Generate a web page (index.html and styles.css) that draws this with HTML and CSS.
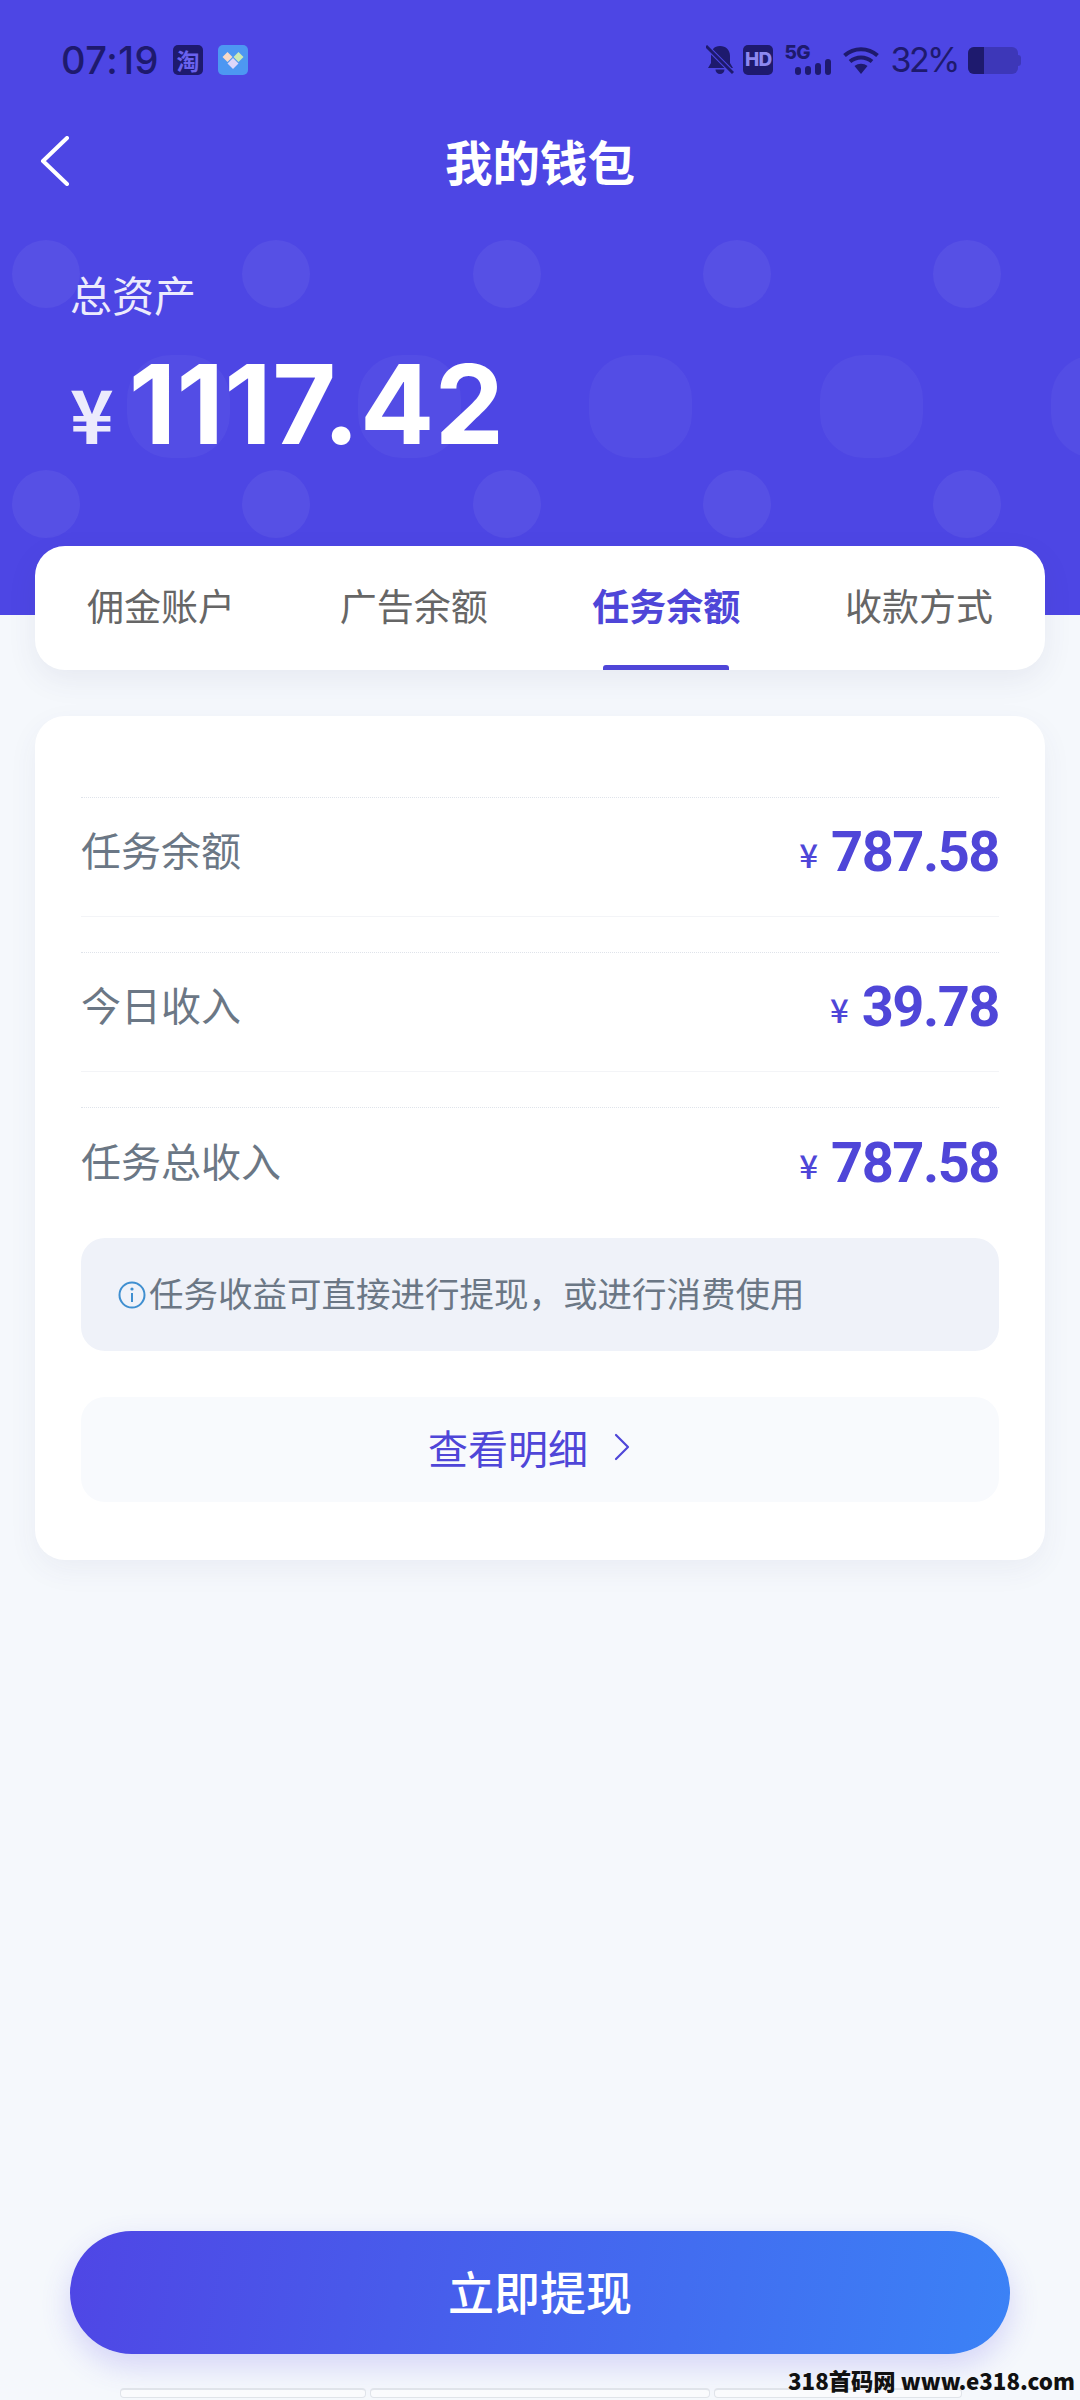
FILE: index.html
```html
<!DOCTYPE html>
<html lang="zh-CN">
<head>
<meta charset="utf-8">
<title>我的钱包</title>
<link rel="stylesheet" href="styles.css">
</head>
<body>
<div class="page">
  <header class="hero">
    <svg class="dots" width="1080" height="615" viewBox="0 0 1080 615" aria-hidden="true">
      <g fill="#fff" fill-opacity=".055">
        <circle cx="46" cy="274" r="34"/><circle cx="276" cy="274" r="34"/><circle cx="507" cy="274" r="34"/><circle cx="737" cy="274" r="34"/><circle cx="967" cy="274" r="34"/>
        <circle cx="46" cy="504" r="34"/><circle cx="276" cy="504" r="34"/><circle cx="507" cy="504" r="34"/><circle cx="737" cy="504" r="34"/><circle cx="967" cy="504" r="34"/>
      </g>
      <g fill="#fff" fill-opacity=".04">
        <rect x="127" y="355" width="103" height="103" rx="44"/><rect x="358" y="355" width="103" height="103" rx="44"/><rect x="589" y="355" width="103" height="103" rx="44"/><rect x="820" y="355" width="103" height="103" rx="44"/><rect x="1051" y="355" width="103" height="103" rx="44"/>
      </g>
    </svg>
    <div class="status">
      <div class="status-left">
        <span class="time">07:19</span>
        <span class="app-taobao">淘</span>
        <svg class="app-icon" width="30" height="30" viewBox="0 0 30 30">
          <rect width="30" height="30" rx="5" fill="#4d97f2"/>
          <path d="M9.500 7l5 5-5 5-5-5z" fill="#f6d9c8"/>
          <path d="M20.500 7l5 5-5 5-5-5z" fill="#cbeab4"/>
          <path d="M15 13l5.500 5.500L15 24l-5.500-5.500z" fill="#dcd6fa"/>
        </svg>
      </div>
      <div class="status-right">
        <svg width="28" height="30" viewBox="0 0 28 30">
          <path d="M14 1c6 0 10 4 10 10v7l3 5H2l3-5v-7C5 5 8 1 14 1z" fill="#1e1a6e"/>
          <path d="M9.500 24.500h9a4.500 4.500 0 0 1-9 0z" fill="#1e1a6e"/>
          <path d="M2 3l24 24" stroke="#4d46e4" stroke-width="5"/>
          <path d="M0 1l27 27" stroke="#1e1a6e" stroke-width="3"/>
        </svg>
        <span class="hd">HD</span>
        <span class="signal">
          <span class="signal-label">5G</span>
          <span class="signal-bars"><i class="b1"></i><i class="b2"></i><i class="b3"></i><i class="b4"></i></span>
        </span>
        <svg class="wifi" width="36" height="29" viewBox="0 0 36 29">
          <g fill="none" stroke="#1e1a6e" stroke-width="4">
            <path d="M1.500 9.500C11 1 25 1 34.500 9.500"/>
            <path d="M7 15.500c6.500-5.500 15.500-5.500 22 0"/>
          </g>
          <path d="M11.500 20c4-3 9-3 13 0L18 28z" fill="#1e1a6e"/>
        </svg>
        <span class="battery-text">32%</span>
        <span class="battery"><i class="battery-fill"></i></span>
      </div>
    </div>
    <div class="nav">
      <svg class="back" width="30" height="50" viewBox="0 0 30 50">
        <path d="M27 2L3 25l24 23" fill="none" stroke="#fff" stroke-width="4" stroke-linecap="round" stroke-linejoin="round"/>
      </svg>
      <h1 class="title">我的钱包</h1>
    </div>
    <div class="assets">
      <div class="assets-label">总资产</div>
      <div class="assets-amount"><span class="assets-yen">¥</span><span class="assets-num">1117.42</span></div>
    </div>
  </header>

  <nav class="tabs">
    <span class="tab">佣金账户</span>
    <span class="tab">广告余额</span>
    <span class="tab tab-active">任务余额</span>
    <span class="tab">收款方式</span>
  </nav>

  <section class="card">
    <div class="row">
      <span class="row-label">任务余额</span>
      <span class="row-value"><span class="row-yen">¥</span><span class="row-num">787.58</span></span>
    </div>
    <div class="row">
      <span class="row-label">今日收入</span>
      <span class="row-value"><span class="row-yen">¥</span><span class="row-num">39.78</span></span>
    </div>
    <div class="row row-last">
      <span class="row-label">任务总收入</span>
      <span class="row-value"><span class="row-yen">¥</span><span class="row-num">787.58</span></span>
    </div>
    <div class="notice">
      <svg width="28" height="28" viewBox="0 0 28 28">
        <circle cx="14" cy="14" r="12.500" fill="none" stroke="#3f8fd0" stroke-width="2"/>
        <circle cx="14" cy="8" r="1.600" fill="#3f8fd0"/>
        <path d="M14 12v9" stroke="#3f8fd0" stroke-width="2"/>
      </svg>
      <span>任务收益可直接进行提现，或进行消费使用</span>
    </div>
    <div class="detail">
      <span>查看明细</span>
      <svg width="16" height="28" viewBox="0 0 16 28">
        <path d="M2 2l12 12L2 26" fill="none" stroke="#4f46d8" stroke-width="2.200" stroke-linecap="round" stroke-linejoin="round"/>
      </svg>
    </div>
  </section>

  <button class="withdraw">立即提现</button>

  <div class="strip"><i class="strip-a"></i><i class="strip-b"></i><i class="strip-c"></i></div>
  <div class="watermark">318首码网 www.e318.com</div>
</div>
</body>
</html>
```

FILE: styles.css
```css
* { box-sizing: border-box; }
html, body { margin: 0; padding: 0; }
body { font-family: "Noto Sans CJK SC", "Noto Sans", sans-serif; }
.page {
  position: relative;
  width: 1080px;
  height: 2400px;
  overflow: hidden;
  display: flex;
  flex-direction: column;
  background: #f5f8fc;
}
.hero {
  position: relative;
  height: 615px;
  flex: none;
  padding-top: 45px;
  background: #4d46e4;
  color: #fff;
}
.dots { position: absolute; left: 0; top: 0; }
.status {
  position: relative;
  display: flex;
  justify-content: space-between;
  align-items: center;
  height: 30px;
  padding: 0 60px 0 61px;
  color: #1e1a6e;
}
.status-left, .status-right { display: flex; align-items: center; }
.time {
  width: 112px;
  font-family: "Inter", sans-serif;
  font-size: 38px;
  font-weight: 500;
  line-height: 30px;
  letter-spacing: 0.5px;
}
.app-taobao {
  width: 30px;
  height: 30px;
  border-radius: 5px;
  background: #1e1a6e;
  color: #6a62ee;
  font-size: 23px;
  font-weight: 700;
  line-height: 30px;
  text-align: center;
}
.app-icon { margin-left: 15px; }
.hd {
  width: 30px;
  height: 30px;
  margin-left: 9px;
  border-radius: 5px;
  background: #1e1a6e;
  color: #8d88f0;
  font-family: "Inter", sans-serif;
  font-size: 19px;
  font-weight: 800;
  line-height: 30px;
  text-align: center;
  letter-spacing: -0.5px;
}
.signal {
  position: relative;
  display: flex;
  justify-content: flex-end;
  align-items: flex-end;
  width: 47px;
  height: 30px;
  margin-left: 11px;
}
.signal-label {
  position: absolute;
  left: 0;
  top: 0;
  font-family: "Inter", sans-serif;
  font-size: 19px;
  font-weight: 800;
  line-height: 15px;
  letter-spacing: -0.5px;
}
.signal-bars { display: flex; align-items: flex-end; gap: 4px; }
.signal-bars i { display: block; width: 6px; border-radius: 3px; background: #1e1a6e; }
.b1 { height: 8px; }
.b2 { height: 9px; }
.b3 { height: 12px; }
.b4 { height: 16px; }
.wifi { margin-left: 12px; }
.battery-text {
  margin-left: 11px;
  font-family: "Inter", sans-serif;
  font-size: 34px;
  font-weight: 400;
  line-height: 30px;
  letter-spacing: -2.5px;
}
.battery {
  position: relative;
  display: block;
  width: 50px;
  height: 27px;
  margin: 0 2px 0 10px;
  border-radius: 6px;
  background: #3d37b8;
}
.battery::after {
  content: "";
  position: absolute;
  right: -3px;
  top: 8px;
  width: 3px;
  height: 11px;
  border-radius: 0 3px 3px 0;
  background: #3d37b8;
}
.battery-fill {
  display: block;
  width: 16px;
  height: 100%;
  border-radius: 6px 0 0 6px;
  background: #1e1a6e;
}
.nav {
  position: relative;
  display: flex;
  justify-content: center;
  align-items: center;
  height: 60px;
  margin-top: 56px;
}
.back { position: absolute; left: 40px; top: 5px; }
.title { margin: 0; font-size: 47.500px; font-weight: 700; line-height: 58px; }
.assets { position: relative; padding-left: 70px; margin-top: 73px; }
.assets-label { font-size: 42px; line-height: 60px; color: #ecebfc; }
.assets-amount { display: flex; align-items: baseline; margin-top: 25px; height: 110px; line-height: 110px; }
.assets-yen { font-size: 74px; font-weight: 700; color: #ecebfc; }
.assets-num { margin-left: 15px; font-family: "Inter", sans-serif; font-size: 110px; font-weight: 700; letter-spacing: 0.4px; }
.tabs {
  position: relative;
  flex: none;
  display: flex;
  justify-content: space-between;
  width: 1010px;
  height: 124px;
  margin: -69px 0 0 35px;
  padding: 0 52px;
  border-radius: 30px;
  background: #fff;
  box-shadow: 0 10px 30px rgba(60, 70, 120, .08);
}
.tab {
  position: relative;
  font-size: 37px;
  line-height: 119px;
  color: #666;
}
.tab-active { color: #4f46d8; font-weight: 700; }
.tab-active::after {
  content: "";
  position: absolute;
  left: 11px;
  right: 11px;
  bottom: 0;
  height: 5px;
  border-radius: 3px 3px 0 0;
  background: #4f46d8;
}
.card {
  flex: none;
  width: 1010px;
  height: 844px;
  margin: 46px 0 0 35px;
  padding: 81px 46px 0;
  border-radius: 30px;
  background: #fff;
  box-shadow: 0 10px 30px rgba(60, 70, 120, .06);
}
.row {
  display: flex;
  justify-content: space-between;
  align-items: center;
  height: 120px;
  margin-bottom: 35px;
  padding-bottom: 16px;
  border-top: 1px dotted #dfe3ea;
  border-bottom: 1px solid #f3f4f7;
}
.row-last { height: 131px; margin-bottom: 0; padding-bottom: 26px; border-bottom: 0; }
.row-label { font-size: 40px; color: #6b7785; }
.row-value { display: flex; align-items: baseline; color: #4f46d8; }
.row-yen { font-size: 33px; font-weight: 500; }
.row-num { position: relative; top: 3px; margin-left: 13px; font-family: "Roboto", sans-serif; font-size: 56px; font-weight: 700; letter-spacing: -1.5px; }
.notice {
  display: flex;
  align-items: center;
  height: 113px;
  padding: 0 0 6px 37px;
  border-radius: 24px;
  background: #eff2f9;
  color: #6b7785;
  font-size: 34.500px;
}
.notice svg { margin-top: 6px; }
.notice span { margin-left: 3px; }
.detail {
  display: flex;
  justify-content: center;
  align-items: center;
  gap: 26px;
  height: 105px;
  margin-top: 46px;
  padding: 0 22px 5px 0;
  border-radius: 24px;
  background: #f8fafd;
  color: #4f46d8;
  font-size: 40px;
}
.withdraw {
  flex: none;
  display: block;
  width: 940px;
  height: 123px;
  margin: auto 0 46px 70px;
  padding: 0 0 5px;
  border: 0;
  border-radius: 62px;
  background: linear-gradient(100deg, #4f46e5, #3b82f6);
  box-shadow: 0 12px 30px rgba(79, 70, 229, .2);
  color: #fff;
  font-family: inherit;
  font-size: 46px;
  font-weight: 500;
}
.strip {
  position: absolute;
  left: 120px;
  bottom: 2px;
  display: flex;
  gap: 4px;
}
.strip i {
  display: block;
  height: 10px;
  border: 1px solid #e0e4ea;
  border-top-width: 2px;
  border-radius: 4px;
  background: #fafbfd;
}
.strip-a { width: 246px; }
.strip-b { width: 340px; }
.strip-c { width: 248px; }
.watermark {
  position: absolute;
  right: 5px;
  bottom: 8px;
  font-size: 22.300px;
  font-weight: 900;
  line-height: 24px;
  color: #111;
}
```
